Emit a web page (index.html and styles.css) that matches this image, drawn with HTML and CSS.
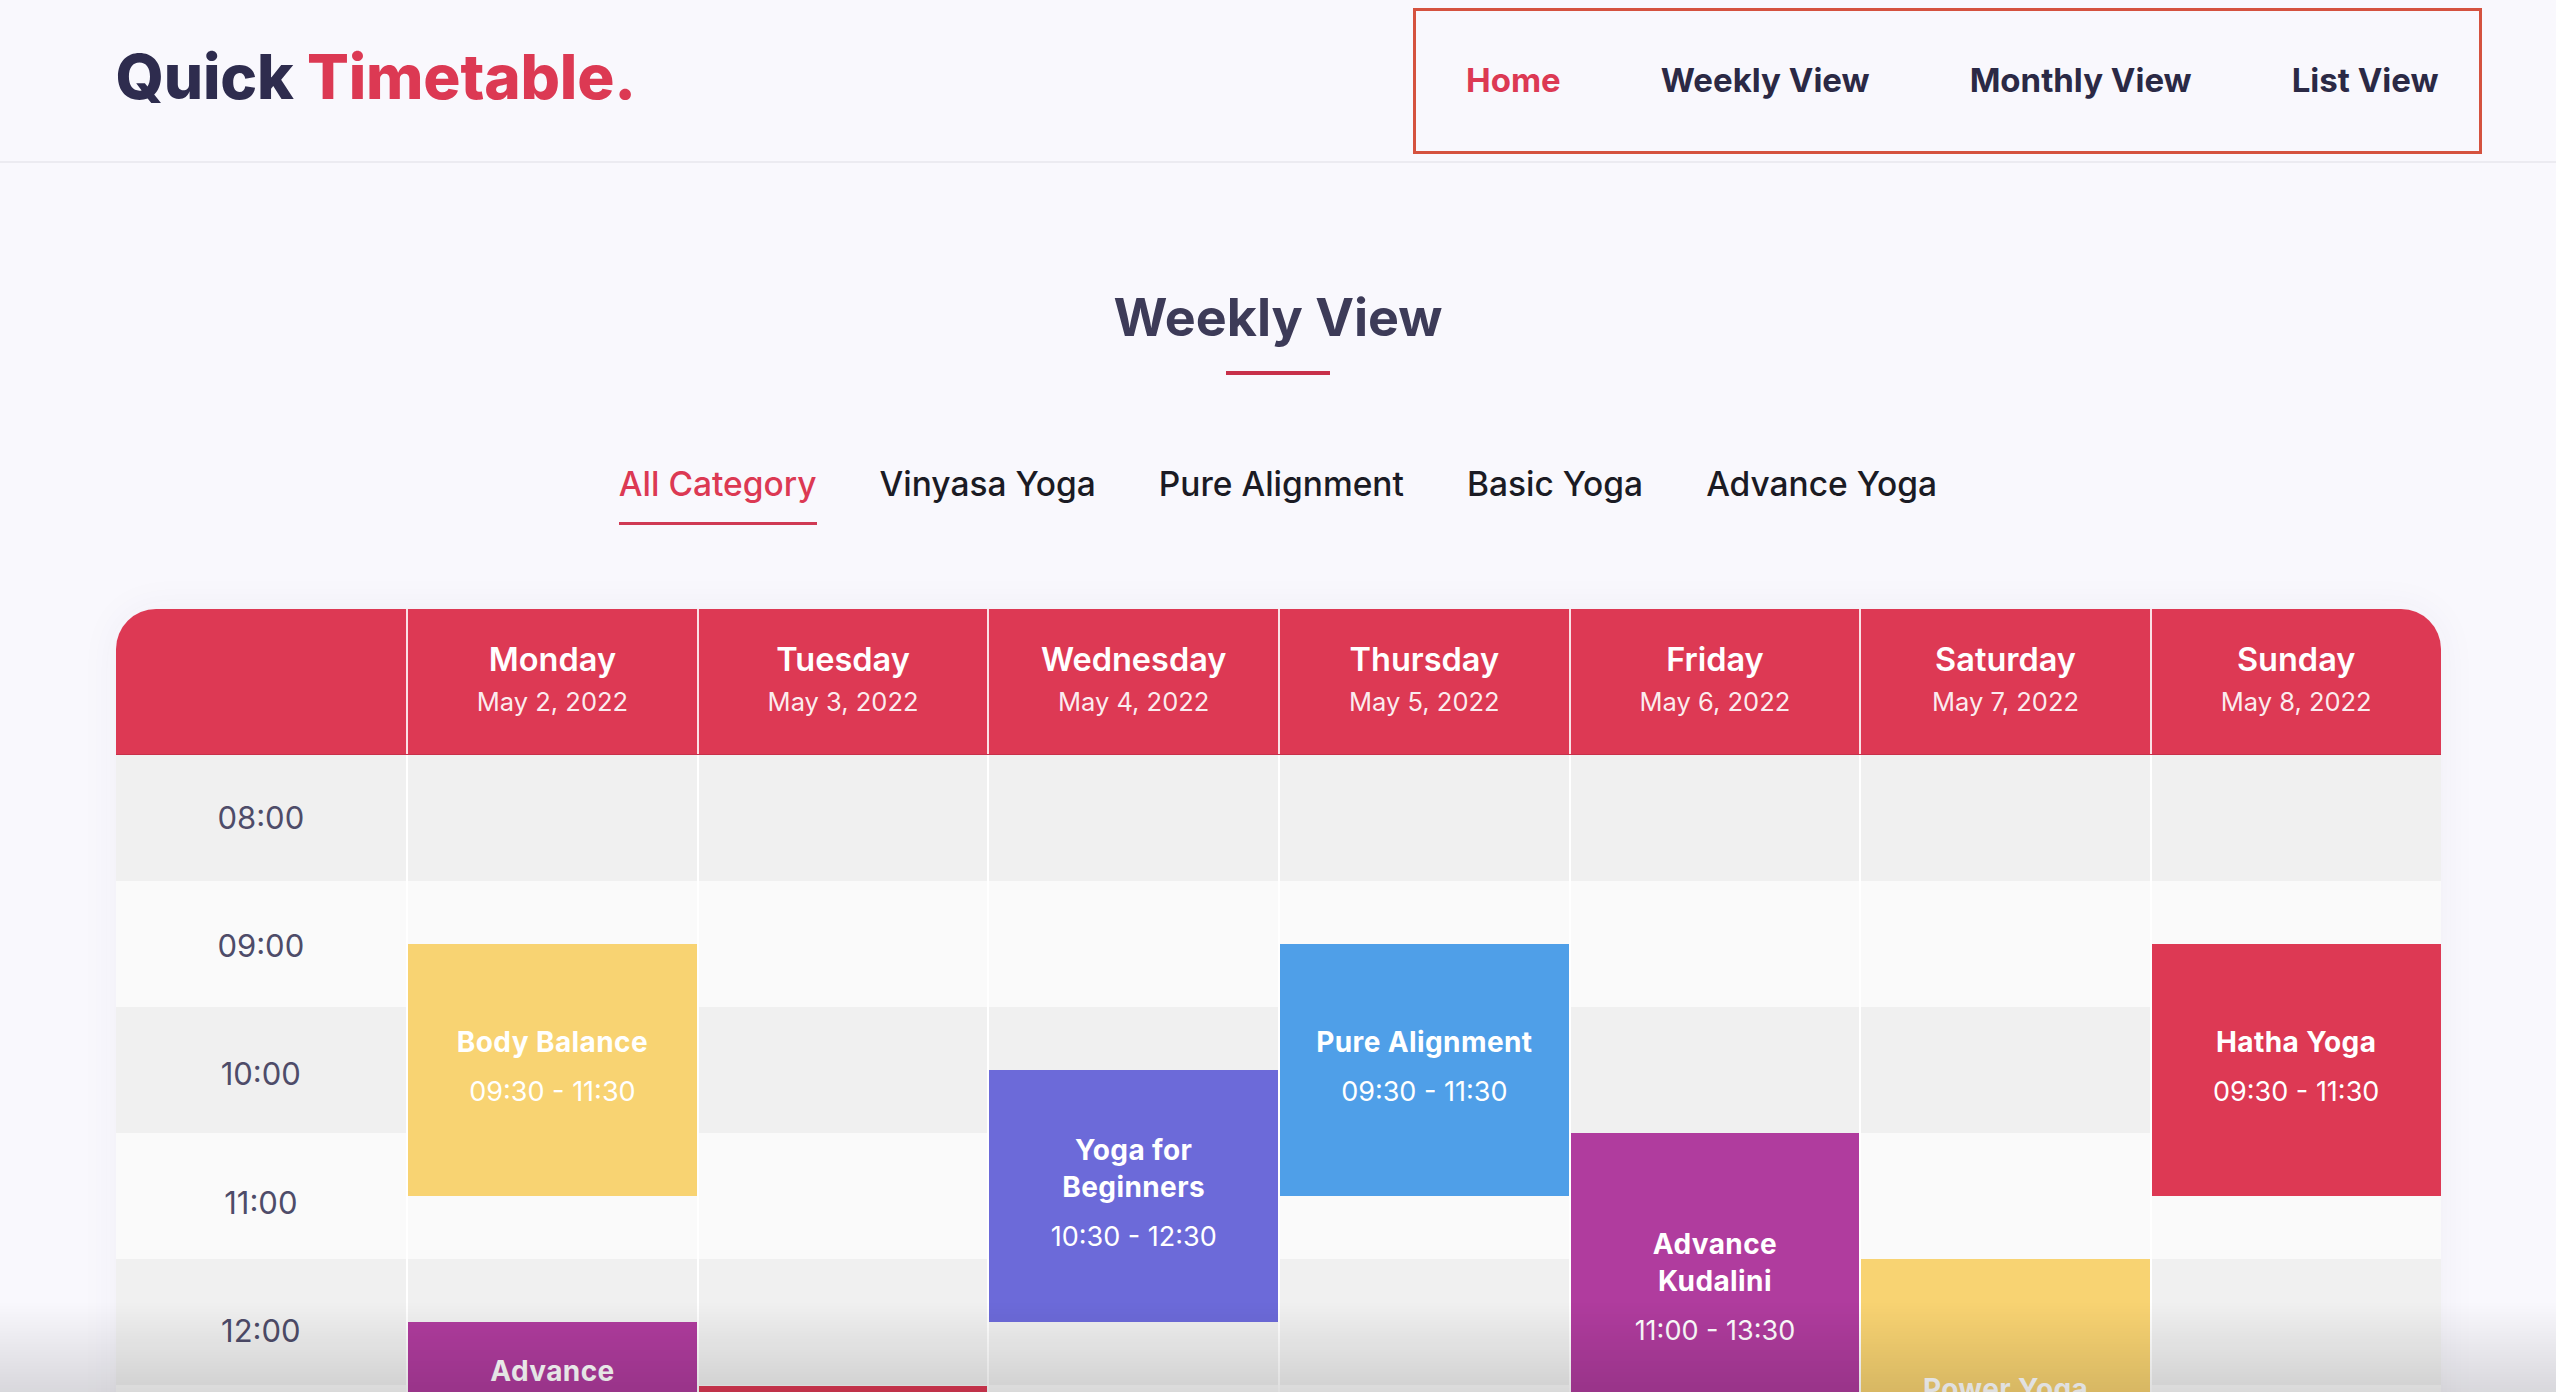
FILE: index.html
```html
<!DOCTYPE html>
<html lang="en">
<head>
<meta charset="utf-8">
<title>Quick Timetable</title>
<link rel="stylesheet" href="styles.css">
</head>
<body>
<header class="site-header">
  <div class="container header-inner">
    <div class="logo">Quick <span class="logo-accent">Timetable.</span></div>
    <nav class="main-nav">
      <a class="nav-link active" href="#">Home</a>
      <a class="nav-link" href="#">Weekly View</a>
      <a class="nav-link" href="#">Monthly View</a>
      <a class="nav-link" href="#">List View</a>
    </nav>
  </div>
</header>

<main class="container">
  <h1 class="page-title">Weekly View</h1>

  <ul class="tabs">
    <li class="tab active">All Category</li>
    <li class="tab">Vinyasa Yoga</li>
    <li class="tab">Pure Alignment</li>
    <li class="tab">Basic Yoga</li>
    <li class="tab">Advance Yoga</li>
  </ul>

  <div class="timetable">
    <div class="tt-head">
      <div class="th th-blank"></div>
      <div class="th"><div class="th-day">Monday</div><div class="th-date">May 2, 2022</div></div>
      <div class="th"><div class="th-day">Tuesday</div><div class="th-date">May 3, 2022</div></div>
      <div class="th"><div class="th-day">Wednesday</div><div class="th-date">May 4, 2022</div></div>
      <div class="th"><div class="th-day">Thursday</div><div class="th-date">May 5, 2022</div></div>
      <div class="th"><div class="th-day">Friday</div><div class="th-date">May 6, 2022</div></div>
      <div class="th"><div class="th-day">Saturday</div><div class="th-date">May 7, 2022</div></div>
      <div class="th"><div class="th-day">Sunday</div><div class="th-date">May 8, 2022</div></div>
    </div>

    <div class="tt-body">
      <div class="col col-time">
        <div class="cell">08:00</div>
        <div class="cell">09:00</div>
        <div class="cell">10:00</div>
        <div class="cell">11:00</div>
        <div class="cell">12:00</div>
        <div class="cell">13:00</div>
        <div class="cell">14:00</div>
        <div class="cell">15:00</div>
      </div>

      <div class="col col-day">
        <div class="cell"></div><div class="cell"></div><div class="cell"></div><div class="cell"></div>
        <div class="cell"></div><div class="cell"></div><div class="cell"></div><div class="cell"></div>
        <div class="event ev-yellow" style="top:189.3px;height:252.4px">
          <div class="ev-title">Body Balance</div><div class="ev-time">09:30 - 11:30</div>
        </div>
        <div class="event ev-purple" style="top:567.9px;height:189.3px">
          <div class="ev-title">Advance<br>Kudalini</div><div class="ev-time">12:30 - 14:00</div>
        </div>
      </div>

      <div class="col col-day">
        <div class="cell"></div><div class="cell"></div><div class="cell"></div><div class="cell"></div>
        <div class="cell"></div><div class="cell"></div><div class="cell"></div><div class="cell"></div>
        <div class="event ev-red" style="top:631px;height:252.4px">
          <div class="ev-title">Hatha Yoga</div><div class="ev-time">13:00 - 15:00</div>
        </div>
      </div>

      <div class="col col-day">
        <div class="cell"></div><div class="cell"></div><div class="cell"></div><div class="cell"></div>
        <div class="cell"></div><div class="cell"></div><div class="cell"></div><div class="cell"></div>
        <div class="event ev-indigo" style="top:315.5px;height:252.4px">
          <div class="ev-title">Yoga for<br>Beginners</div><div class="ev-time">10:30 - 12:30</div>
        </div>
      </div>

      <div class="col col-day">
        <div class="cell"></div><div class="cell"></div><div class="cell"></div><div class="cell"></div>
        <div class="cell"></div><div class="cell"></div><div class="cell"></div><div class="cell"></div>
        <div class="event ev-blue" style="top:189.3px;height:252.4px">
          <div class="ev-title">Pure Alignment</div><div class="ev-time">09:30 - 11:30</div>
        </div>
      </div>

      <div class="col col-day">
        <div class="cell"></div><div class="cell"></div><div class="cell"></div><div class="cell"></div>
        <div class="cell"></div><div class="cell"></div><div class="cell"></div><div class="cell"></div>
        <div class="event ev-purple" style="top:378.6px;height:315.5px">
          <div class="ev-title">Advance<br>Kudalini</div><div class="ev-time">11:00 - 13:30</div>
        </div>
      </div>

      <div class="col col-day">
        <div class="cell"></div><div class="cell"></div><div class="cell"></div><div class="cell"></div>
        <div class="cell"></div><div class="cell"></div><div class="cell"></div><div class="cell"></div>
        <div class="event ev-yellow" style="top:504.8px;height:315.5px">
          <div class="ev-title">Power Yoga</div><div class="ev-time">12:00 - 14:30</div>
        </div>
      </div>

      <div class="col col-day">
        <div class="cell"></div><div class="cell"></div><div class="cell"></div><div class="cell"></div>
        <div class="cell"></div><div class="cell"></div><div class="cell"></div><div class="cell"></div>
        <div class="event ev-red" style="top:189.3px;height:252.4px">
          <div class="ev-title">Hatha Yoga</div><div class="ev-time">09:30 - 11:30</div>
        </div>
      </div>
    </div>
  </div>
</main>

<div class="screen-fade"></div>
</body>
</html>
```

FILE: styles.css
```css
* { box-sizing: border-box; }

html, body {
  margin: 0;
  padding: 0;
}

body {
  background: #f9f8fd;
  font-family: "Inter", "Roboto", "Liberation Sans", sans-serif;
  color: #2b2945;
}

.container {
  width: 2325px;
  margin: 0 auto;
}

/* ---------- header ---------- */
.site-header {
  height: 163px;
  border-bottom: 2px solid #ecebf1;
}

.header-inner {
  height: 161px;
  display: flex;
  align-items: center;
  justify-content: space-between;
}

.logo {
  font-size: 62px;
  font-weight: 800;
  line-height: 1;
  color: #2e2c4e;
  letter-spacing: -0.2px;
  margin-top: -8px;
}

.logo-accent { color: #dc3953; }

.main-nav {
  display: flex;
  align-items: center;
  gap: 100px;
  height: 146px;
  margin-right: -41px;
  padding: 0 40px 0 50px;
  border: 3px solid #d5523f;
}

.nav-link {
  font-size: 33px;
  font-weight: 650;
  line-height: 1;
  color: #2b2945;
  text-decoration: none;
}

.nav-link.active { color: #dc3953; }

/* ---------- title ---------- */
.page-title {
  margin: 129px 0 0;
  font-size: 52px;
  font-weight: 750;
  line-height: 1;
  color: #3d3b58;
  text-align: center;
  display: flex;
  flex-direction: column;
  align-items: center;
}

.page-title::after {
  content: "";
  display: block;
  width: 104px;
  height: 4px;
  margin-top: 27px;
  background: #c8304a;
}

/* ---------- tabs ---------- */
.tabs {
  list-style: none;
  margin: 93px 0 0;
  padding: 0;
  display: flex;
  justify-content: center;
  gap: 63px;
}

.tab {
  font-size: 33.5px;
  font-weight: 500;
  line-height: 1;
  color: #1b1b24;
  padding-bottom: 20px;
  border-bottom: 3px solid transparent;
}

.tab.active {
  color: #dc3953;
  border-bottom-color: #d03a54;
}

/* ---------- timetable ---------- */
.timetable {
  margin-top: 84px;
  box-shadow: 0 0 40px rgba(60, 50, 120, 0.05);
  border-radius: 40px 40px 0 0;
}

.tt-head {
  display: grid;
  grid-template-columns: repeat(8, 1fr);
  height: 146px;
  background: #dd3954;
  border-radius: 40px 40px 0 0;
  border-bottom: 1px solid #c8304a;
  overflow: hidden;
}

.th {
  display: flex;
  flex-direction: column;
  align-items: center;
  justify-content: center;
  color: #fff;
  gap: 13px;
}

.th + .th { border-left: 2px solid rgba(255, 255, 255, 0.85); }

.th-day {
  font-size: 32.5px;
  font-weight: 600;
  line-height: 1;
  margin-top: -4px;
}

.th-date {
  font-size: 25.5px;
  font-weight: 400;
  line-height: 1;
  color: rgba(255, 255, 255, 0.92);
}

.tt-body {
  display: grid;
  grid-template-columns: repeat(8, 1fr);
}

.col {
  position: relative;
  display: flex;
  flex-direction: column;
}

.col-day { border-left: 2px solid #ffffff; }

.cell {
  height: 126.2px;
  flex: none;
  background: #f0f0f0;
}

.cell:nth-child(even) { background: #fafafa; }

.col-time .cell {
  display: flex;
  align-items: center;
  justify-content: center;
  font-size: 31px;
  font-weight: 400;
  color: #4e4c69;
}

/* labels drift slightly downward row by row, as in the original */
.col-time .cell:nth-child(2) { padding-top: 4px; }
.col-time .cell:nth-child(3) { padding-top: 8px; }
.col-time .cell:nth-child(4) { padding-top: 12px; }
.col-time .cell:nth-child(5) { padding-top: 16px; }
.col-time .cell:nth-child(6) { padding-top: 20px; }
.col-time .cell:nth-child(7) { padding-top: 24px; }
.col-time .cell:nth-child(8) { padding-top: 28px; }

.event {
  position: absolute;
  left: 0;
  right: 0;
  display: flex;
  flex-direction: column;
  align-items: center;
  justify-content: center;
  text-align: center;
  color: #fff;
  padding: 0 16px 6px;
}

.ev-title {
  font-size: 28px;
  font-weight: 700;
  line-height: 37px;
  letter-spacing: 0.4px;
}

.ev-time {
  font-size: 27px;
  font-weight: 400;
  line-height: 37px;
  margin-top: 12px;
}

.ev-yellow { background: #f8d372; }
.ev-purple { background: #b03c9e; }
.ev-red { background: #dd3954; }
.ev-indigo { background: #6c6ad9; }
.ev-blue { background: #4f9fe8; }

/* bottom screen shading */
.screen-fade {
  position: fixed;
  left: 0;
  right: 0;
  bottom: 0;
  height: 90px;
  pointer-events: none;
  background: linear-gradient(to bottom, rgba(0, 0, 0, 0), rgba(0, 0, 0, 0.13));
}
```
